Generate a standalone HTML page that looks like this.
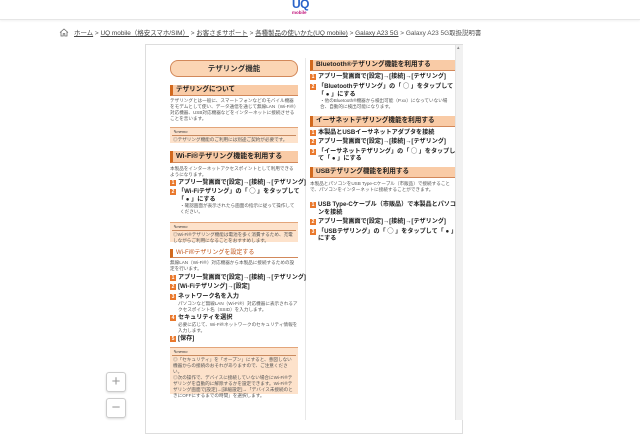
<!DOCTYPE html>
<html><head><meta charset="utf-8"><style>
*{margin:0;padding:0;box-sizing:border-box}
body{width:640px;height:420px;overflow:hidden;background:#fff;font-family:"Liberation Sans","Noto Sans CJK JP",sans-serif;position:relative;color:#333}
.a{position:absolute;white-space:nowrap}
.hdr{position:absolute;left:0;top:0;width:640px;height:20px;background:#fff;border-bottom:1px solid #e6e6e6;box-shadow:0 1px 2px rgba(0,0,0,.06)}
.bc{top:28px;left:74px;font-size:6.45px;color:#555}
.bc u{color:#444}
.doc{position:absolute;left:145px;top:44px;width:318px;height:390px;border:1px solid #ddd;background:#fff}
.sb{position:absolute;left:455px;top:45px;width:8px;height:375px;background:#f1f1f1;border-left:1px solid #e4e4e4}
.pill{position:absolute;left:170px;top:60px;width:128px;height:17px;border:1px solid #d2885a;border-radius:8px;background:#fbd5b4;font-size:7.5px;font-weight:bold;text-align:center;line-height:15px;color:#333}
.h{position:absolute;height:11px;background:#f9cba6;border-left:3px solid #d2691e;border-bottom:1px solid #d2885a;font-size:6.6px;line-height:10px;padding-left:3px;color:#222;font-weight:bold}
.p{position:absolute;font-size:4.6px;line-height:6px;color:#555}
.s{position:absolute;font-size:6.1px;line-height:8px;color:#222;white-space:nowrap;font-weight:bold}
.s b{display:inline-block;width:6px;height:6px;background:#e9782c;color:#fff;font-size:5px;line-height:6px;text-align:center;margin-right:2px;vertical-align:0}
.m{position:absolute;background:#fde2cb;border-top:1px solid #e3a57a}
.m i{position:absolute;left:3px;top:1px;font-size:4px;color:#333}
.m .ln{position:absolute;left:2px;right:2px;top:7px;border-top:1px solid #c98a5f}
.vr{position:absolute;left:305px;top:58px;width:1px;height:362px;background:#e8e8e8}
.zb{position:absolute;left:106px;width:20px;height:20px;border:1px solid #ccc;border-radius:3px;background:#fff;color:#999;font-size:15px;text-align:center;line-height:17px;box-shadow:0 1px 2px rgba(0,0,0,.15)}
</style></head><body>
<div class="hdr"></div>
<div class="a" style="left:292px;top:-3px;font-size:12px;font-weight:bold;color:#2a63c9;letter-spacing:-0.5px">UQ</div>
<div class="a" style="left:292px;top:10px;font-size:4.5px;font-weight:bold;color:#c0117a">mobile</div>
<svg class="a" style="left:59px;top:28px" width="10" height="9" viewBox="0 0 10 9"><path d="M1 4.5L5 1l4 3.5M2 3.8V8h2.2V5.6h1.6V8H8V3.8" fill="none" stroke="#666" stroke-width=".8"/></svg>
<div class="a bc"><u>ホーム</u> &gt; <u>UQ mobile（格安スマホ/SIM）</u> &gt; <u>お客さまサポート</u> &gt; <u>各種製品の使いかた(UQ mobile)</u> &gt; <u>Galaxy A23 5G</u> &gt; Galaxy A23 5G取扱説明書</div>
<div class="doc"></div>
<div class="sb"></div>
<div class="a" style="left:457px;top:45px;font-size:5px;color:#888">▴</div>
<div class="vr"></div>

<div class="pill">テザリング機能</div>
<div class="h" style="left:170px;top:85px;width:128px">テザリングについて</div>
<div class="p" style="left:170px;top:98px;width:128px">テザリングとは一般に、スマートフォンなどのモバイル機器をモデムとして使い、データ通信を通じて無線LAN（Wi-Fi®）対応機器、USB対応機器などをインターネットに接続させることを言います。</div>
<div class="m" style="left:170px;top:127px;width:128px;height:16px"><i>✎memo</i><div class="ln"></div><div class="p" style="left:3px;top:9px">◎テザリング機能のご利用には別途ご契約が必要です。</div></div>
<div class="h" style="left:170px;top:151px;width:128px;height:12px;line-height:11px;font-size:7px">Wi-Fi®テザリング機能を利用する</div>
<div class="p" style="left:170px;top:166px;width:128px">本製品をインターネットアクセスポイントとして利用できるようになります。</div>
<div class="s" style="left:170px;top:179px"><b>1</b>アプリ一覧画面で[設定]→[接続]→[テザリング]</div>
<div class="s" style="left:170px;top:188px"><b>2</b>「Wi-Fiテザリング」の「 ◯ 」をタップして</div>
<div class="s" style="left:178px;top:196px">「 ● 」にする</div>
<div class="p" style="left:180px;top:203px;width:118px">・確認画面が表示されたら画面の指示に従って操作してください。</div>
<div class="m" style="left:170px;top:222px;width:128px;height:20px"><i>✎memo</i><div class="ln"></div><div class="p" style="left:3px;top:9px;width:122px">◎Wi-Fi®テザリング機能は電池を多く消費するため、充電しながらご利用になることをおすすめします。</div></div>
<div class="h" style="left:170px;top:249px;width:128px;height:9px;background:none;font-weight:normal;font-size:6px;line-height:8px;color:#c0551a">Wi-Fi®テザリングを設定する</div>
<div class="p" style="left:170px;top:260px;width:128px">無線LAN（Wi-Fi®）対応機器から本製品に接続するための設定を行います。</div>
<div class="s" style="left:170px;top:274px"><b>1</b>アプリ一覧画面で[設定]→[接続]→[テザリング]</div>
<div class="s" style="left:170px;top:283px"><b>2</b>[Wi-Fiテザリング]→[設定]</div>
<div class="s" style="left:170px;top:293px"><b>3</b>ネットワーク名を入力</div>
<div class="p" style="left:178px;top:301px;width:120px">パソコンなど無線LAN（Wi-Fi®）対応機器に表示されるアクセスポイント名（SSID）を入力します。</div>
<div class="s" style="left:170px;top:314px"><b>4</b>セキュリティを選択</div>
<div class="p" style="left:178px;top:322px;width:120px">必要に応じて、Wi-Fi®ネットワークのセキュリティ情報を入力します。</div>
<div class="s" style="left:170px;top:335px"><b>5</b>[保存]</div>
<div class="m" style="left:170px;top:347px;width:128px;height:47px"><i>✎memo</i><div class="ln"></div><div class="p" style="left:3px;top:9px;width:122px">◎「セキュリティ」を「オープン」にすると、意図しない機器からの接続のおそれがありますので、ご注意ください。<br>◎次の操作で、デバイスに接続していない場合にWi-Fi®テザリングを自動的に解除するかを設定できます。Wi-Fi®テザリング画面で[設定]→[詳細設定]→「デバイス未接続のときにOFFにするまでの時間」を選択します。</div></div>

<div class="h" style="left:310px;top:60px;width:145px">Bluetooth®テザリング機能を利用する</div>
<div class="s" style="left:310px;top:73px"><b>1</b>アプリ一覧画面で[設定]→[接続]→[テザリング]</div>
<div class="s" style="left:310px;top:83px"><b>2</b>「Bluetoothテザリング」の「 ◯ 」をタップして</div>
<div class="s" style="left:318px;top:91px">「 ● 」にする</div>
<div class="p" style="left:320px;top:98px;width:130px">・他のBluetooth®機器から検出可能（P.xx）になっていない場合、自動的に検出可能になります。</div>
<div class="h" style="left:310px;top:116px;width:145px">イーサネットテザリング機能を利用する</div>
<div class="s" style="left:310px;top:129px"><b>1</b>本製品とUSBイーサネットアダプタを接続</div>
<div class="s" style="left:310px;top:138px"><b>2</b>アプリ一覧画面で[設定]→[接続]→[テザリング]</div>
<div class="s" style="left:310px;top:148px"><b>3</b>「イーサネットテザリング」の「 ◯ 」をタップし</div>
<div class="s" style="left:318px;top:155px">て「 ● 」にする</div>
<div class="h" style="left:310px;top:167px;width:145px">USBテザリング機能を利用する</div>
<div class="p" style="left:310px;top:181px;width:145px">本製品とパソコンをUSB Type-Cケーブル（市販品）で接続することで、パソコンをインターネットに接続することができます。</div>
<div class="s" style="left:310px;top:201px"><b>1</b>USB Type-Cケーブル（市販品）で本製品とパソコ</div>
<div class="s" style="left:318px;top:209px">ンを接続</div>
<div class="s" style="left:310px;top:218px"><b>2</b>アプリ一覧画面で[設定]→[接続]→[テザリング]</div>
<div class="s" style="left:310px;top:228px"><b>3</b>「USBテザリング」の「 ◯ 」をタップして「 ● 」</div>
<div class="s" style="left:318px;top:235px">にする</div>

<div class="zb" style="top:372px">+</div>
<div class="zb" style="top:398px">−</div>
</body></html>
